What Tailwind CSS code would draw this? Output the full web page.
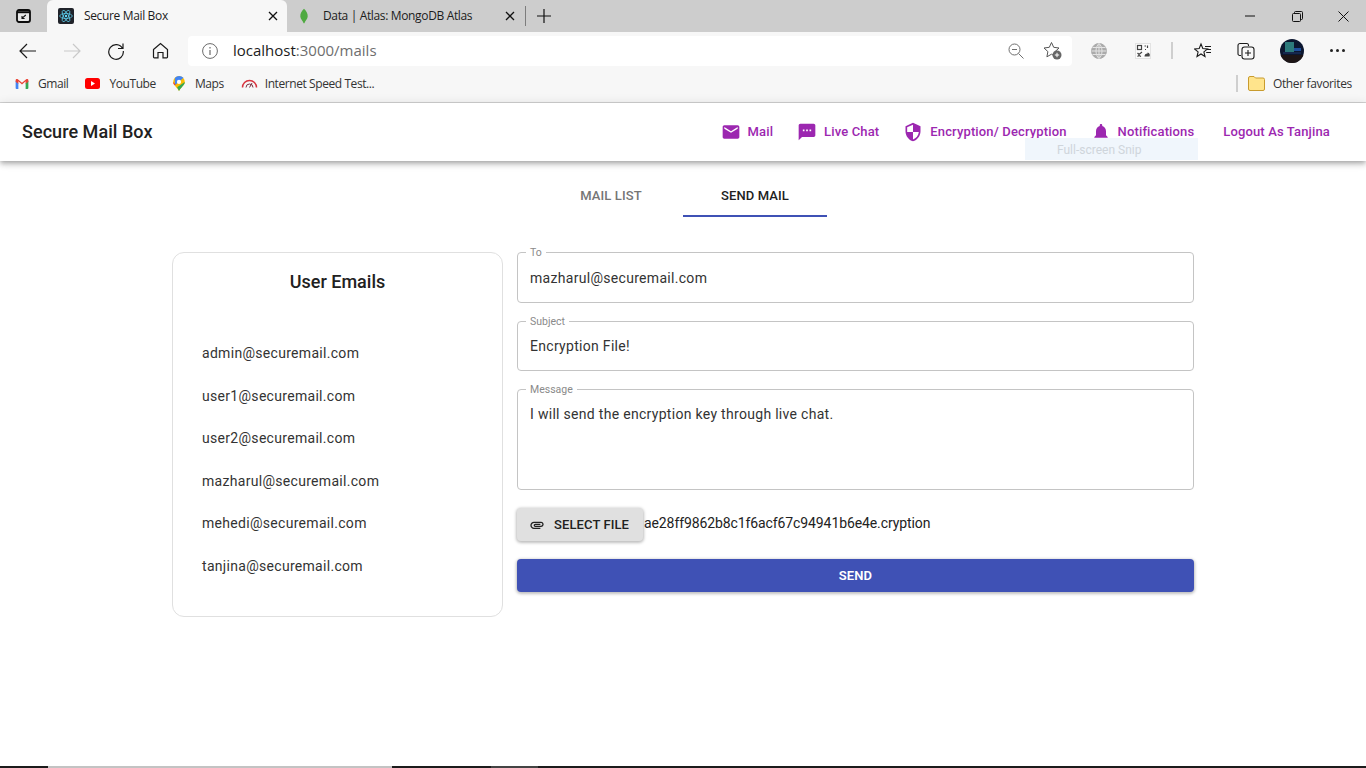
<!DOCTYPE html>
<html lang="en"><head><meta charset="utf-8"><title>Secure Mail Box</title>
<script src="https://cdn.jsdelivr.net/npm/@tailwindcss/browser@4"></script></head>
<body class="bg-white">
<div class="relative w-[1366px] h-[768px] overflow-hidden flex flex-col font-['Roboto',sans-serif] text-[#212121]">

<!-- tab strip -->
<div class="h-8 bg-[#cdcdcd] flex items-end shrink-0 font-['Open_Sans',sans-serif] text-xs text-[#1c1c1c] tracking-[-0.35px]">
  <div class="w-[47px] h-8 flex items-center justify-center">
    <svg width="15" height="14" viewBox="0 0 15 14" fill="none"><rect x="1" y="1" width="13" height="12" rx="2" fill="#e8e8e8" stroke="#0c0c0c" stroke-width="1.800"/><path d="M1 3.200h13" stroke="#0c0c0c" stroke-width="2"/><path d="M9.800 6 6.200 9.200M6 7v2.500h2.600" stroke="#111" stroke-width="1.100"/></svg>
  </div>
  <div class="w-[240px] h-8 bg-[#f7f7f7] rounded-t-[6px] flex items-center pl-[11px] pr-[9px]">
    <svg width="16" height="16" viewBox="0 0 16 16" class="shrink-0"><rect width="16" height="16" rx="2" fill="#20232a"/><g fill="none" stroke="#61dafb" stroke-width=".7"><ellipse cx="8" cy="8" rx="6.300" ry="2.500"/><ellipse cx="8" cy="8" rx="6.300" ry="2.500" transform="rotate(60 8 8)"/><ellipse cx="8" cy="8" rx="6.300" ry="2.500" transform="rotate(120 8 8)"/></g><circle cx="8" cy="8" r="1.200" fill="#61dafb"/></svg>
    <span class="ml-[10px] flex-1">Secure Mail Box</span>
    <svg width="10" height="10" viewBox="0 0 10 10" stroke="#111" stroke-width="1.300"><path d="M1 1l8 8M9 1l-8 8"/></svg>
  </div>
  <div class="w-[235px] h-8 flex items-center pl-[13px] pr-[7px]">
    <svg width="8" height="16" viewBox="0 0 10 18"><path d="M5 0C8 3 10 6 9.600 10 9.200 13.500 6.500 15 5.500 18H4.500C3.500 15 .8 13.500.4 10 0 6 2 3 5 0Z" fill="#4faa41"/></svg>
    <span class="ml-[15px] flex-1">Data | Atlas: MongoDB Atlas</span>
    <svg width="10" height="10" viewBox="0 0 10 10" stroke="#111" stroke-width="1.300"><path d="M1 1l8 8M9 1l-8 8"/></svg>
  </div>
  <div class="w-px h-5 bg-[#7d7d7d] mb-[6px] ml-[3px]"></div>
  <div class="w-9 h-8 flex items-center justify-center">
    <svg width="14" height="14" viewBox="0 0 14 14" stroke="#111" stroke-width="1.200"><path d="M7 0v14M0 7h14"/></svg>
  </div>
  <div class="ml-auto h-8 flex items-center">
    <div class="w-[46px] flex justify-center -ml-[1px] mr-[1px]"><svg width="10" height="10" viewBox="0 0 10 10" stroke="#111"><path d="M0 5h10"/></svg></div>
    <div class="w-[46px] flex justify-center"><svg width="11" height="11" viewBox="0 0 11 11" fill="none" stroke="#111"><rect x=".5" y="2.500" width="8" height="8" rx="1"/><path d="M2.500 2.500v-1a1 1 0 0 1 1-1h6a1 1 0 0 1 1 1v6a1 1 0 0 1-1 1h-1"/></svg></div>
    <div class="w-[46px] flex justify-center"><svg width="11" height="11" viewBox="0 0 11 11" stroke="#111"><path d="M.5.5l10 10M10.500.5l-10 10"/></svg></div>
  </div>
</div>

<!-- toolbar -->
<div class="h-[37px] bg-[#f7f7f7] flex items-center shrink-0">
  <div class="w-[188px] flex items-center pl-[6px]">
    <div class="w-11 flex justify-center"><svg width="18" height="16" viewBox="0 0 18 16" fill="none" stroke="#1a1a1a" stroke-width="1.200"><path d="M17 8H1M8 1 1 8l7 7"/></svg></div>
    <div class="w-11 flex justify-center"><svg width="18" height="16" viewBox="0 0 18 16" fill="none" stroke="#c9c9c9" stroke-width="1.200"><path d="M1 8h16M10 1l7 7-7 7"/></svg></div>
    <div class="w-11 flex justify-center"><svg width="18" height="18" viewBox="0 0 18 18" fill="none" stroke="#1a1a1a" stroke-width="1.200"><path d="M15.500 6.500A7.300 7.300 0 1 0 16.300 9M16 1.500v5h-5"/></svg></div>
    <div class="w-11 flex justify-center"><svg width="17" height="17" viewBox="0 0 17 17" fill="none" stroke="#1a1a1a" stroke-width="1.200"><path d="M1.500 7.500 8.500 1.500l7 6V15a.8.8 0 0 1-.8.8H11V10.500H6V15.800H2.300a.8.8 0 0 1-.8-.8Z"/></svg></div>
  </div>
  <div class="w-[884px] h-[30px] bg-white rounded-[4px] flex items-center pl-[14px] pr-[10px]">
    <svg width="16" height="16" viewBox="0 0 16 16" fill="none" stroke="#6b6b6b" stroke-width="1"><circle cx="8" cy="8" r="7.400"/><path d="M8 7v5M8 4v1.500" stroke-width="1.200"/></svg>
    <span class="ml-[15px] flex-1 text-[15px] font-['Open_Sans',sans-serif] tracking-[0px] text-[#1c1c1c]">localhost<span class="text-[#6e6e6e]">:3000/mails</span></span>
    <svg width="16" height="16" viewBox="0 0 16 16" fill="none" stroke="#6f6f6f"><circle cx="6.500" cy="6.500" r="5.500"/><path d="M4 6.500h5M10.500 10.500l5 5"/></svg>
    <svg class="ml-[19px]" width="19" height="19" viewBox="0 0 19 19"><path d="M8.500 1.500 10.700 6.300 16 7l-3.900 3.600 1 5.200-4.600-2.600-4.600 2.600 1-5.200L1 7l5.300-.7Z" fill="none" stroke="#555"/><circle cx="14" cy="14" r="4.500" fill="#666"/><path d="M14 11.800v4.400M11.800 14h4.400" stroke="#fff"/></svg>
  </div>
  <div class="flex-1 flex items-center pl-[19px]">
    <svg width="16" height="16" viewBox="0 0 16 16" fill="none" stroke="#ababab" stroke-width="1"><circle cx="8" cy="8" r="7.500" fill="#ababab"/><path stroke="#e4e4e4" d="M.5 8h15M1.500 4.500h13M1.500 11.500h13M8 .5v15M8 .5C4 4 4 12 8 15.500M8 .5c4 3.500 4 11.500 0 15"/></svg>
    <svg class="ml-[28px]" width="16" height="16" viewBox="0 0 16 16"><rect x=".5" y=".5" width="15" height="15" fill="#fbfbfb" stroke="#e3e3e3"/><g fill="none" stroke="#444" stroke-width="1.200"><rect x="2.500" y="2.500" width="4" height="4"/><path d="M9.500 3h1.500M12.500 2.500v2.500M10 6.500h1M2.500 10l1.500 1.500L7 9M2.500 13.500l1.500-1 2 1"/></g><path d="M9.500 13.500a3 3 0 0 1 3-3v-1a3 3 0 0 1 2 4Z" fill="#444"/></svg>
    <div class="ml-[20px] w-0.5 h-[17px] bg-[#cfcfcf]"></div>
    <svg class="ml-[21px]" width="18" height="18" viewBox="0 0 18 18" fill="none" stroke="#1a1a1a" stroke-width="1.100"><path d="M7 2 8.800 6.500l4.700.4-3.600 3 1.100 4.600L7 12l-4 2.500 1.100-4.600-3.600-3 4.700-.4ZM11 4.500h6M12.800 7.500H17M12.200 10.500H17"/></svg>
    <svg class="ml-[25px]" width="18" height="18" viewBox="0 0 18 18" fill="none" stroke="#1a1a1a" stroke-width="1.100"><path d="M4 13.500H2.800a1.800 1.800 0 0 1-1.800-1.800V3.500a2 2 0 0 1 2-2h6.500A1.800 1.800 0 0 1 11.500 3v1"/><rect x="5" y="5" width="12" height="12" rx="2.500"/><path d="M11 8v6M8 11h6"/></svg>
    <svg class="ml-[25px]" width="24" height="24" viewBox="0 0 24 24"><defs><clipPath id="av"><circle cx="12" cy="12" r="12"/></clipPath></defs><g clip-path="url(#av)"><rect width="24" height="24" fill="#0c1730"/><rect y="16" width="24" height="8" fill="#1d1516"/><rect x="5" y="3" width="9" height="10" fill="#2c7a7c"/><rect x="14" y="9" width="7" height="3" fill="#1e4f9c"/><rect x="3" y="13" width="18" height="2" fill="#16284e"/></g></svg>
    <div class="ml-[26px] flex gap-[3px]"><i class="w-[3px] h-[3px] rounded-full bg-[#222]"></i><i class="w-[3px] h-[3px] rounded-full bg-[#222]"></i><i class="w-[3px] h-[3px] rounded-full bg-[#222]"></i></div>
  </div>
</div>

<!-- bookmarks -->
<div class="h-[34px] bg-[#f7f7f7] border-b border-[#d2d2d2] flex items-center shrink-0 pb-[4px] pl-[15px] pr-[14px] font-['Open_Sans',sans-serif] text-xs text-[#333] tracking-[-0.42px]">
  <svg width="14" height="10" viewBox="0 0 14 11"><path d="M0 2v8a1 1 0 0 0 1 1h2V4.500Z" fill="#4285f4"/><path d="M14 2v8a1 1 0 0 1-1 1h-2V4.500Z" fill="#34a853"/><path d="M0 1.500C0 .2 1.400-.4 2.400.4L7 4l4.600-3.600c1-.8 2.400-.2 2.400 1.100V3l-3 2.300V2.500L7 6 3 2.500v2.800L0 3Z" fill="#ea4335"/></svg>
  <span class="ml-[9px]">Gmail</span>
  <svg class="ml-[17px]" width="15" height="11" viewBox="0 0 15 11"><rect width="15" height="11" rx="2.500" fill="#f00"/><path d="M6 3v5l4-2.500Z" fill="#fff"/></svg>
  <span class="ml-[9px]">YouTube</span>
  <svg class="ml-[17px]" width="12" height="15" viewBox="0 0 13 16"><path d="M6.500 0A6.300 6.300 0 0 0 .2 6.300C.2 10 4.500 12 6.500 16c2-4 6.300-6 6.300-9.700A6.300 6.300 0 0 0 6.500 0Z" fill="#fbbc04"/><path d="M2 2a6.300 6.300 0 0 1 9.300-.1L2 10Z" fill="#4285f4"/><path d="M.2 6.300 3 9 1.600 10C.7 8.800.2 7.700.2 6.300Z" fill="#ea4335"/><path d="M12.800 6.300c0 3.700-4.300 5.700-6.300 9.700l-2-4Z" fill="#34a853"/><circle cx="6.500" cy="6.300" r="2.300" fill="#fff"/></svg>
  <span class="ml-[10px]">Maps</span>
  <svg class="ml-[17px] -mt-[2px]" width="17" height="11" viewBox="0 0 17 11" fill="none" stroke-width="1.500"><path d="M1.500 10.500a7 7 0 0 1 14 0" stroke="#d8343f"/><path d="M5 10.500a3.500 3.500 0 0 1 7 0M8.500 10.500 11 6" stroke="#7c3345" stroke-width="1"/></svg>
  <span class="ml-[7px]">Internet Speed Test...</span>
  <div class="ml-auto w-0.5 h-[17px] bg-[#cfcfcf]"></div>
  <svg class="ml-[10px]" width="17" height="15" viewBox="0 0 17 15"><path d="M.5 2A1.500 1.500 0 0 1 2 .5h4L7.500 2H15A1.500 1.500 0 0 1 16.500 3.500V13a1.500 1.500 0 0 1-1.500 1.500H2A1.500 1.500 0 0 1 .5 13Z" fill="#ffe48c" stroke="#c89b2e"/></svg>
  <span class="ml-[8px] tracking-[-0.35px]">Other favorites</span>
</div>

<!-- app bar -->
<header class="h-[58px] bg-white flex items-center justify-between shrink-0 pl-[22px] pr-[36px] shadow-[0_2px_4px_-1px_rgba(0,0,0,.2),0_4px_5px_0_rgba(0,0,0,.14),0_1px_10px_0_rgba(0,0,0,.12)] relative z-10">
  <h1 class="text-lg font-medium text-[#212121] tracking-[.05px]">Secure Mail Box</h1>
  <nav class="flex items-center text-[13px] font-medium text-[#9c27b0] tracking-[.14px]">
    <svg width="20" height="20" viewBox="0 0 24 24" fill="currentColor"><path d="M20 4H4c-1.100 0-1.990.9-1.990 2L2 18c0 1.100.9 2 2 2h16c1.100 0 2-.9 2-2V6c0-1.100-.9-2-2-2zm0 4l-8 5-8-5V6l8 5 8-5v2z"/></svg>
    <span class="ml-[7px]">Mail</span>
    <svg class="ml-[24px]" width="20" height="20" viewBox="0 0 24 24" fill="currentColor"><path d="M20 2H4c-1.100 0-1.990.9-1.990 2L2 22l4-4h14c1.100 0 2-.9 2-2V4c0-1.100-.9-2-2-2zM9 11H7V9h2v2zm4 0h-2V9h2v2zm4 0h-2V9h2v2z"/></svg>
    <span class="ml-[7px]">Live Chat</span>
    <svg class="ml-[24px]" width="20" height="20" viewBox="0 0 24 24" fill="currentColor"><path d="M12 1L3 5v6c0 5.550 3.840 10.740 9 12 5.160-1.260 9-6.450 9-12V5l-9-4zm0 10.990h7c-.53 4.120-3.280 7.790-7 8.940V12H5V6.300l7-3.110v8.800z"/></svg>
    <span class="ml-[7px]">Encryption/ Decryption</span>
    <svg class="ml-[24px]" width="20" height="20" viewBox="0 0 24 24" fill="currentColor"><path d="M12 22c1.100 0 2-.9 2-2h-4c0 1.100.89 2 2 2zm6-6v-5c0-3.070-1.640-5.640-4.500-6.320V4c0-.83-.67-1.500-1.500-1.500s-1.500.67-1.500 1.500v.68C7.630 5.360 6 7.920 6 11v5l-2 2v1h16v-1l-2-2z"/></svg>
    <span class="ml-[7px]">Notifications</span>
    <span class="ml-[29px]">Logout As Tanjina</span>
  </nav>
</header>
<!-- ghost snip tooltip -->
<div class="absolute z-20 left-[1025px] top-[138px] w-[173px] h-[22px] bg-[#f0f6fc] text-[#cfd5db] text-[12px] flex items-center pl-[32px] pt-[1px]">Full-screen Snip</div>

<!-- tabs -->
<div class="flex justify-center shrink-0 mt-[20px] text-[13px] font-medium tracking-[.1px]">
  <div class="w-36 h-9 pb-[4px] flex items-center justify-center text-[#757575] border-b-2 border-transparent">MAIL LIST</div>
  <div class="w-36 h-9 pb-[4px] flex items-center justify-center text-[#212121] border-b-2 border-[#3f51b5]">SEND MAIL</div>
</div>

<!-- content -->
<main class="w-[1022px] mx-auto mt-[30px] flex items-start gap-[14px]">
  <aside class="w-[331px] h-[365px] mt-[5px] border border-[#e0e0e0] rounded-xl">
    <h2 class="text-lg font-medium text-center mt-[16px] leading-[25px]">User Emails</h2>
    <ul class="mt-[49px] pl-[29px] text-sm tracking-[.3px] text-[#333] flex flex-col gap-[22.500px] leading-[20px]">
      <li>admin@securemail.com</li>
      <li>user1@securemail.com</li>
      <li>user2@securemail.com</li>
      <li>mazharul@securemail.com</li>
      <li>mehedi@securemail.com</li>
      <li>tanjina@securemail.com</li>
    </ul>
  </aside>
  <form class="flex-1 flex flex-col">
    <fieldset class="h-14 border border-[#c4c4c4] rounded px-2">
      <legend class="text-[10.500px] leading-[11px] px-[4px] text-[#8a8a8a]">To</legend>
      <div class="text-sm tracking-[.3px] text-[#333] pl-[4px] pt-[10px] leading-[20px]">mazharul@securemail.com</div>
    </fieldset>
    <fieldset class="h-[55px] mt-[13px] border border-[#c4c4c4] rounded px-2">
      <legend class="text-[10.500px] leading-[11px] px-[4px] text-[#8a8a8a]">Subject</legend>
      <div class="text-sm tracking-[.3px] text-[#333] pl-[4px] pt-[9px] leading-[20px]">Encryption File!</div>
    </fieldset>
    <fieldset class="h-[106px] mt-[13px] border border-[#c4c4c4] rounded px-2">
      <legend class="text-[10.500px] leading-[11px] px-[4px] text-[#8a8a8a]">Message</legend>
      <div class="text-sm tracking-[.3px] text-[#333] pl-[4px] pt-[9px] leading-[20px]">I will send the encryption key through live chat.</div>
    </fieldset>
    <div class="flex items-center mt-[18px]">
      <div class="w-[126px] h-[33px] bg-[#e0e0e0] rounded flex items-center pl-[12px] text-[13px] font-medium tracking-[.1px] text-[#212121] shadow-[0_1px_3px_1px_rgba(0,0,0,.25)]">
        <svg width="16" height="16" viewBox="0 0 24 24" fill="currentColor"><path d="M2 12.500C2 9.460 4.460 7 7.500 7H18c2.210 0 4 1.790 4 4s-1.790 4-4 4H9.500C8.120 15 7 13.880 7 12.500S8.120 10 9.500 10H17v2H9.410c-.55 0-.55 1 0 1H18c1.100 0 2-.9 2-2s-.9-2-2-2H7.500C5.570 9 4 10.570 4 12.500S5.570 16 7.500 16H17v2H7.500C4.460 18 2 15.540 2 12.500z"/></svg>
        <span class="ml-[9px]">SELECT FILE</span>
      </div>
      <span class="ml-[1px] text-sm text-[#222] -mt-[3px] tracking-[-.1px]">ae28ff9862b8c1f6acf67c94941b6e4e.cryption</span>
    </div>
    <div class="mt-[18px] h-[33px] bg-[#3f51b5] rounded flex items-center justify-center text-white text-[13px] font-semibold tracking-[.1px] shadow-[0_1px_3px_1px_rgba(0,0,0,.25)]">SEND</div>
  </form>
</main>

<!-- taskbar sliver -->
<div class="mt-auto h-0.5 bg-[#1c1c1c] flex shrink-0">
  <div class="ml-12 w-[344px] bg-[#c3c3c3]"></div>
  <div class="ml-[99px] w-[47px] bg-[#444]"></div>
</div>
</div>
</body></html>
